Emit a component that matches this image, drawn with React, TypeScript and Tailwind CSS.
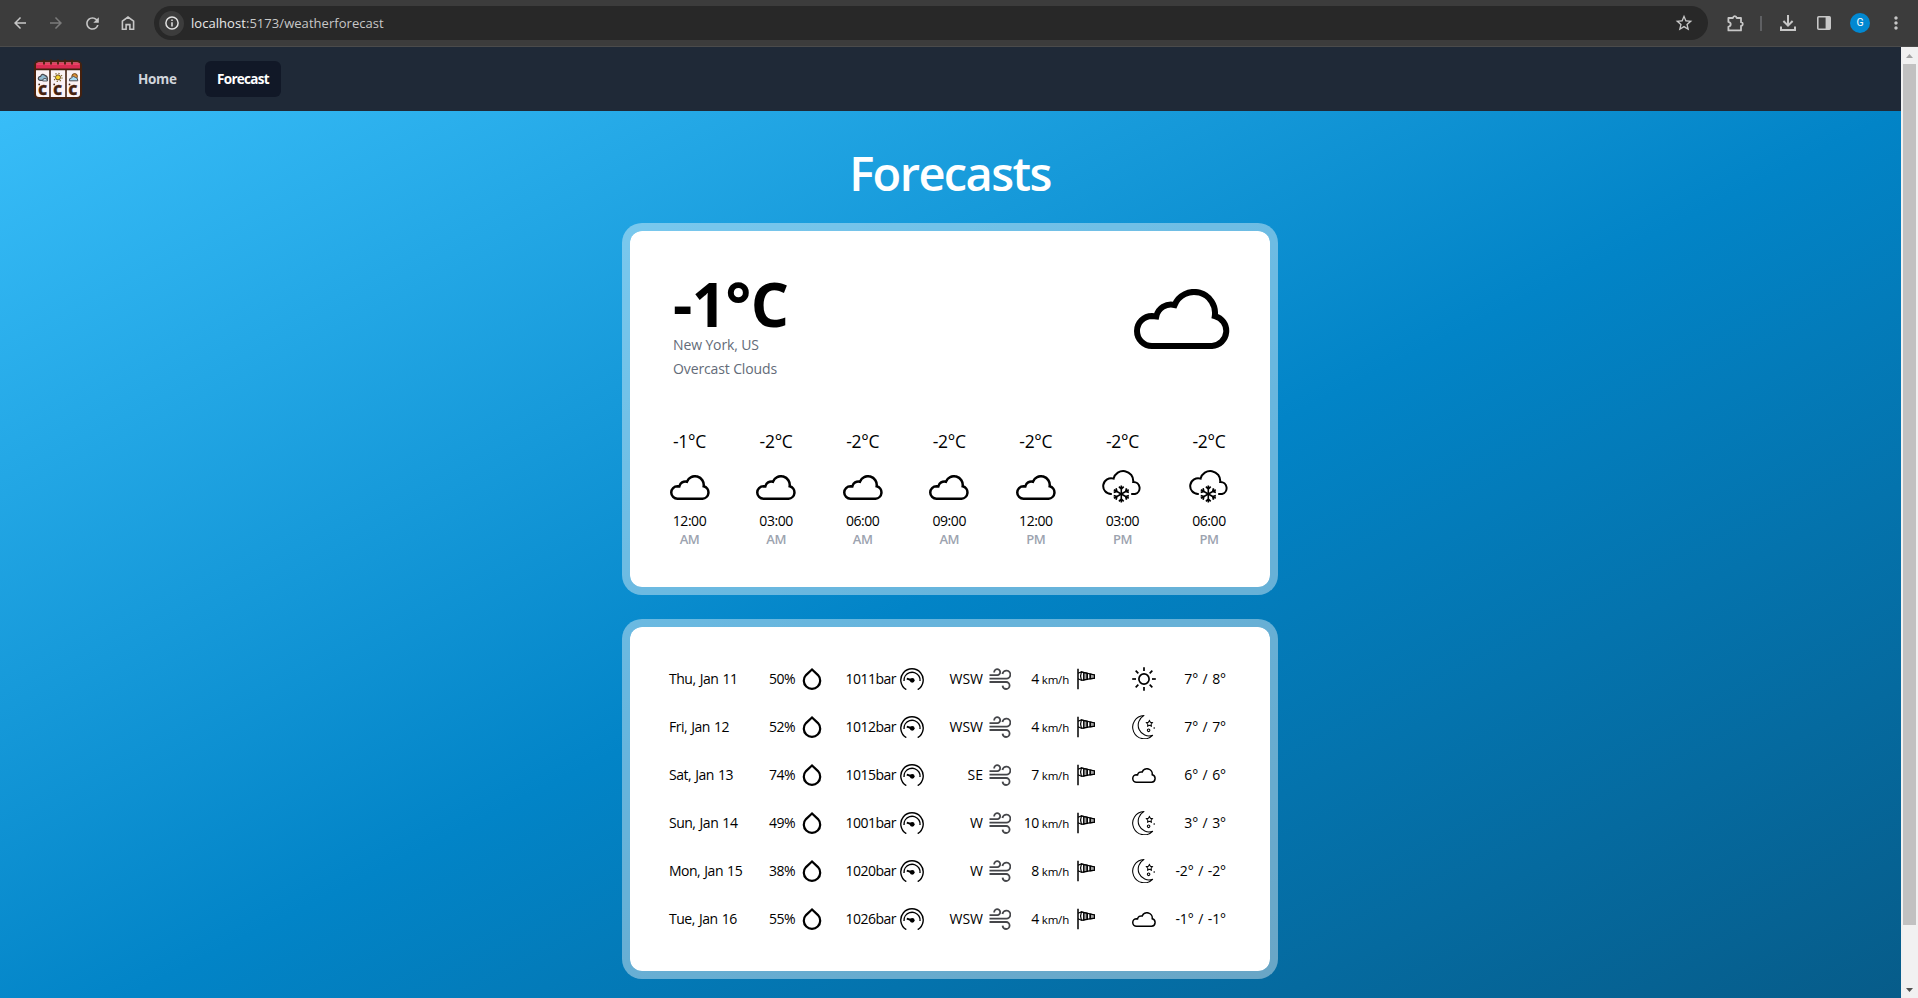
import type { ReactNode } from "react";
import { MdArrowBack, MdArrowForward, MdMoreVert, MdRefresh, MdStarBorder } from "react-icons/md";

type IconProps = { className?: string };

function CloudIcon({ className }: IconProps) {
  return (
    <svg viewBox="0 0 96 60" className={className} fill="none" stroke="#000" strokeWidth="6">
      <path d="M18 57A15 15 0 0 1 18 27L22.3 27.4A15 15 0 0 1 40.6 16A21 21 0 0 1 80.8 27.1A15.2 15.2 0 0 1 78 57Z" />
    </svg>
  );
}

function SnowIcon({ className }: IconProps) {
  return (
    <svg viewBox="0 0 40 34" className={className} fill="none" stroke="#000" strokeWidth="2">
      <path d="M9.8 25H9A7.9 7.9 0 1 1 11.6 9.6A9.97 9.97 0 0 1 31.2 13A6.1 6.1 0 0 1 33 25H29.2" />
      <g strokeWidth="1.6">
        {[0, 60, 120, 180, 240, 300].map((a) => (
          <path key={a} transform={`rotate(${a} 19.3 25)`} d="M19.3 25V16.4M16.9 17.6L19.3 20L21.7 17.6" />
        ))}
      </g>
    </svg>
  );
}

function DropIcon() {
  return (
    <svg viewBox="0 0 20 22" className="h-[22px] w-5" fill="none" stroke="#000" strokeWidth="2.2">
      <path d="M10 1.5L4 7.1A8.2 8.2 0 1 0 16 7.1Z" />
    </svg>
  );
}

function GaugeIcon() {
  return (
    <svg viewBox="0 0 24 22" className="h-[22px] w-6" fill="none" stroke="#000" strokeWidth="1.4">
      <path d="M6.3 21.6A11.2 11.2 0 1 1 17.7 21.6" />
      <path d="M4 13A8.1 8.1 0 0 1 19 8.2Q20.4 10.5 20 13" />
      <circle cx="12.2" cy="12.3" r="2.4" fill="#000" stroke="none" />
      <path d="M6.8 10.6L12 12.2" strokeWidth="2" />
    </svg>
  );
}

function WindIcon() {
  return (
    <svg viewBox="0 0 22 22" className="h-[22px] w-[22px]" fill="none" stroke="#45464a" strokeWidth="1.8">
      <path d="M5.2 4.5A3 3 0 1 1 8.3 7.2H0.5" />
      <path d="M13.4 6A4 4 0 1 1 17.2 10.6H0.5" />
      <path d="M0.5 14H17.2A3.5 3.5 0 1 1 13.6 17.6" />
    </svg>
  );
}

function WindsockIcon() {
  return (
    <svg viewBox="0 0 18 22" className="h-[22px] w-[18px]" fill="none" stroke="#000" strokeWidth="1.2">
      <path d="M1 0.8V21.2" strokeWidth="1.5" />
      <path d="M1 5.3L4.4 4L17.4 7V10.2L4.4 12.2L1 10.7" />
      <path d="M4.4 4Q2.8 8 4.4 12.2H6.8V4.6Z" fill="#fff" />
      <path d="M6.8 4.6L10.2 5.3V11.4L6.8 11.9ZM13.2 6L17.4 7V10.2L13.2 10.9Z" fill="#a3a3a3" />
      <path d="M10.2 5.3V11.4M13.2 6V10.9" />
    </svg>
  );
}

function SunIcon() {
  return (
    <svg viewBox="0 0 24 24" className="h-6 w-6" fill="none" stroke="#000" strokeWidth="1.7">
      <circle cx="12" cy="12" r="5.1" />
      {[0, 45, 90, 135, 180, 225, 270, 315].map((a) => (
        <path key={a} transform={`rotate(${a} 12 12)`} d="M12 0.2V4" />
      ))}
    </svg>
  );
}

function MoonIcon() {
  return (
    <svg viewBox="0 0 24 24" className="h-6 w-6" fill="none" stroke="#000" strokeWidth="1.05">
      <path d="M11.9 0.6A11.6 11.6 0 1 0 20.6 20.3A10.8 10.8 0 0 1 11.9 0.6Z" strokeLinejoin="round" />
      <path d="M17.4 5.6L18.4 7.3L20.4 7.7L19.1 9.2L19.4 11.1L17.4 10.3L15.6 11.2L15.8 9.2L14.4 7.7L16.4 7.3Z" />
      <circle cx="16.6" cy="15.3" r="1.3" />
      <circle cx="22.2" cy="13" r="0.8" fill="#000" stroke="none" />
    </svg>
  );
}

function Logo() {
  const tiles = [2, 17, 32.3];
  return (
    <svg viewBox="0 0 48 40" className="h-10 w-12">
      <rect x="1" y="2.6" width="46" height="36.4" rx="4" fill="#fbf3f5" stroke="#45210f" strokeWidth="2" />
      <path d="M2 10V6Q2 3.6 4.6 3.6H43.4Q46 3.6 46 6V10Z" fill="#d92b52" />
      <path d="M3 5.2H45" stroke="#f0506c" strokeWidth="1.2" />
      <path d="M10 0.4V5.4M17 0.4V5.4M24 0.4V5.4M31 0.4V5.4M38 0.4V5.4" stroke="#45210f" strokeWidth="1.8" />
      <path d="M1 10.4H47M16 10.4V38.6M32 10.4V38.6" stroke="#45210f" strokeWidth="1.6" />
      <path d="M4.6 20.6Q3.6 18 6.5 17.4Q8 13.8 11 16.4Q14 17.6 13.4 21.4H6Z" fill="#8fb9d0" stroke="#4b4a50" strokeWidth="1.2" />
      <path d="M8.6 22Q8.4 19.4 11 19.4Q13.6 19.6 13.4 22Z" fill="#c9e9f7" stroke="#4b4a50" strokeWidth="0.9" />
      <circle cx="24" cy="18.4" r="2.5" fill="#f6d32f" stroke="#5a3a14" strokeWidth="0.9" />
      <circle cx="24" cy="18.4" r="4" fill="none" stroke="#7b5f22" strokeWidth="1.2" strokeDasharray="1.2 1.94" />
      <circle cx="40.6" cy="17.4" r="2.8" fill="#e09238" stroke="#5a3a14" strokeWidth="0.9" />
      <path d="M35.4 21.8Q35 19 37.6 18.8Q39 16 41.4 18.4Q44 18.8 43.8 21.8Z" fill="#a6dcf5" stroke="#4b4a50" strokeWidth="1" />
      {tiles.map((x) => (
        <g key={x} fill="#45210f">
          <circle cx={x + 3.2} cy="25.4" r="0.9" />
          <text
            x={x + 2.2}
            y="35.8"
            stroke="#45210f"
            strokeWidth="0.5"
            className="font-['Open_Sans',sans-serif] text-[13.5px] font-extrabold"
          >
            C
          </text>
        </g>
      ))}
    </svg>
  );
}

function ToolButton({ children }: { children: ReactNode }) {
  return <div className="flex w-9 shrink-0 items-center justify-center text-[#c7c7c7]">{children}</div>;
}

function BrowserBar() {
  return (
    <div className="flex h-[47px] shrink-0 border-b border-[#4b4b4b] bg-[#3c3c3c] pl-[2px]">
      <ToolButton>
        <MdArrowBack className="size-[18px]" />
      </ToolButton>
      <ToolButton>
        <MdArrowForward className="size-[18px] text-[#7b7b7b]" />
      </ToolButton>
      <ToolButton>
        <MdRefresh className="size-[19px]" />
      </ToolButton>
      <ToolButton>
        <svg viewBox="0 0 14 14" className="size-[14px]" fill="none" stroke="currentColor" strokeWidth="1.6">
          <path d="M1.4 5.2L7 1L12.6 5.2V13.2H8.9V8.6H5.1V13.2H1.4Z" />
        </svg>
      </ToolButton>
      <div className="my-[6px] ml-2 flex w-[1554px] shrink-0 items-center rounded-full bg-[#282828] pl-[5px] pr-[14px]">
        <div className="flex size-[25px] items-center justify-center rounded-full bg-[#3c3c3c]">
          <svg viewBox="0 0 14 14" className="size-[14px]" fill="none" stroke="#e3e3e3" strokeWidth="1.5">
            <circle cx="7" cy="7" r="6.1" />
            <path d="M7 6.2V10.4M7 3.5V5" />
          </svg>
        </div>
        <div className="ml-[7px] flex-1 text-[13px] leading-5 tracking-[0.05px] text-[#c7c7c7]">
          <span className="text-[#e8e8e8]">localhost</span>:5173/weatherforecast
        </div>
        <MdStarBorder className="size-[20px] text-[#c7c7c7]" />
      </div>
      <div className="ml-[9px] flex">
        <ToolButton>
          <svg viewBox="0 0 17 17" className="size-[17px]" fill="none" stroke="currentColor" strokeWidth="1.8">
            <path
              d="M1.4 3H6Q6.2 1.2 7.8 1.2Q9.4 1.2 9.6 3H14V7.2Q15.8 7.4 15.8 9.1Q15.8 10.8 14 11V15.4H1.4V11.8Q3.7 11.2 3.7 9.3Q3.7 7.4 1.4 6.9Z"
              strokeLinejoin="round"
            />
          </svg>
        </ToolButton>
      </div>
      <div className="ml-[7px] mr-2 h-[15px] w-[2px] self-center bg-[#5f6063]" />
      <ToolButton>
        <svg viewBox="0 0 16 16" className="size-4" fill="none" stroke="currentColor" strokeWidth="2">
          <path d="M8 0V10M3.4 6L8 10.6L12.6 6M1 11.4V15H15V11.4" />
        </svg>
      </ToolButton>
      <ToolButton>
        <svg viewBox="0 0 14 14" className="size-[14px]">
          <rect x="0.8" y="0.8" width="12.4" height="12.4" rx="1" fill="none" stroke="currentColor" strokeWidth="1.6" />
          <path d="M8.6 0.8H13V13.2H8.6Z" fill="currentColor" />
        </svg>
      </ToolButton>
      <ToolButton>
        <div className="flex size-5 items-center justify-center rounded-full bg-[#0288d1] font-[Roboto,sans-serif] text-[10.5px] leading-none text-white">
          G
        </div>
      </ToolButton>
      <ToolButton>
        <MdMoreVert className="size-[20px]" />
      </ToolButton>
    </div>
  );
}

function Scrollbar() {
  return (
    <div className="flex w-[17px] shrink-0 flex-col items-center bg-[#f1f1f1]">
      <svg viewBox="0 0 17 17" className="size-[17px] shrink-0" fill="#a3a3a3">
        <path d="M5 11L8.5 7L12 11Z" />
      </svg>
      <div className="h-[861px] w-[13px] shrink-0 bg-[#c1c1c1]" />
      <svg viewBox="0 0 17 17" className="mt-auto size-[17px] shrink-0" fill="#505050">
        <path d="M5 7L8.5 11L12 7Z" />
      </svg>
    </div>
  );
}

const hours = [
  { temp: "-1°C", time: "12:00", period: "AM", snow: false },
  { temp: "-2°C", time: "03:00", period: "AM", snow: false },
  { temp: "-2°C", time: "06:00", period: "AM", snow: false },
  { temp: "-2°C", time: "09:00", period: "AM", snow: false },
  { temp: "-2°C", time: "12:00", period: "PM", snow: false },
  { temp: "-2°C", time: "03:00", period: "PM", snow: true },
  { temp: "-2°C", time: "06:00", period: "PM", snow: true },
];

const days = [
  { date: "Thu, Jan 11", humidity: "50%", pressure: "1011bar", dir: "WSW", speed: "4", sky: "sun", range: "7° / 8°" },
  { date: "Fri, Jan 12", humidity: "52%", pressure: "1012bar", dir: "WSW", speed: "4", sky: "moon", range: "7° / 7°" },
  { date: "Sat, Jan 13", humidity: "74%", pressure: "1015bar", dir: "SE", speed: "7", sky: "cloud", range: "6° / 6°" },
  { date: "Sun, Jan 14", humidity: "49%", pressure: "1001bar", dir: "W", speed: "10", sky: "moon", range: "3° / 3°" },
  { date: "Mon, Jan 15", humidity: "38%", pressure: "1020bar", dir: "W", speed: "8", sky: "moon", range: "-2° / -2°" },
  { date: "Tue, Jan 16", humidity: "55%", pressure: "1026bar", dir: "WSW", speed: "4", sky: "cloud", range: "-1° / -1°" },
];

function SkyIcon({ sky }: { sky: string }) {
  if (sky === "sun") return <SunIcon />;
  if (sky === "moon") return <MoonIcon />;
  return <CloudIcon className="h-[15px] w-6" />;
}

function CurrentCard() {
  return (
    <section className="h-[372px] w-[656px] rounded-[20px] border-8 border-white/40 bg-white bg-clip-padding pt-[45px]">
      <div className="flex justify-between pl-[43px] pr-10">
        <div>
          <div className="text-[60px] font-bold leading-[57px] tracking-[-0.5px]">-1°C</div>
          <div className="text-[14px] font-medium leading-6 tracking-[-0.12px] text-[#636b78]">New York, US</div>
          <div className="text-[14px] font-medium leading-6 tracking-[-0.12px] text-[#636b78]">Overcast Clouds</div>
        </div>
        <CloudIcon className="mt-[13px] h-[60px] w-24" />
      </div>
      <div className="mt-[46px] flex justify-between pl-[39.5px] pr-[41px]">
        {hours.map((h, i) => (
          <div key={i} className="flex w-10 flex-col items-center whitespace-nowrap">
            <div className="text-[17.5px] font-medium leading-7 tracking-[-0.3px]">{h.temp}</div>
            <div className="mt-3 flex h-10 items-center">
              {h.snow ? <SnowIcon className="mb-0.5 h-[34px] w-10" /> : <CloudIcon className="h-[25px] w-10" />}
            </div>
            <div className="mt-1 text-[14px] font-medium leading-5 tracking-[-0.45px]">{h.time}</div>
            <div className="text-[13px] font-semibold leading-4 tracking-[-0.5px] text-[#9ca3af]">{h.period}</div>
          </div>
        ))}
      </div>
    </section>
  );
}

function DailyCard() {
  return (
    <section className="mt-6 h-[360px] w-[656px] rounded-[20px] border-8 border-white/40 bg-white bg-clip-padding py-7 pl-[39px] pr-11">
      {days.map((d) => (
        <div
          key={d.date}
          className="grid h-12 grid-cols-[99px_54px_102px_87px_84px_61px_70px] items-center whitespace-nowrap text-[14px] font-medium leading-6 tracking-[-0.5px]"
        >
          <div className="[word-spacing:1px]">{d.date}</div>
          <div className="flex items-center justify-end gap-[7px]">
            {d.humidity}
            <DropIcon />
          </div>
          <div className="flex items-center justify-end gap-1">
            {d.pressure}
            <GaugeIcon />
          </div>
          <div className="flex items-center justify-end gap-[6px] tracking-[0px]">
            {d.dir}
            <WindIcon />
          </div>
          <div className="flex items-center justify-end gap-2">
            <span>
              {d.speed} <span className="text-[11.5px] font-medium tracking-[-0.2px]">km/h</span>
            </span>
            <WindsockIcon />
          </div>
          <div className="flex items-center justify-end">
            <SkyIcon sky={d.sky} />
          </div>
          <div className="text-right tracking-[-0.1px] [word-spacing:1px]">{d.range}</div>
        </div>
      ))}
    </section>
  );
}

export default function App() {
  return (
    <div className="flex h-screen w-full flex-col overflow-hidden bg-[#202020] font-['Open_Sans','Noto_Sans',sans-serif] text-black">
      <BrowserBar />
      <div className="flex min-h-0 flex-1">
        <div className="min-w-0 flex-1 overflow-hidden">
          <nav className="flex h-16 items-center bg-[#1f2937] pl-[34px] text-[13.5px] font-bold leading-5">
            <Logo />
            <a className="ml-11 w-[63px] px-3 py-2 tracking-[-0.3px] text-[#d1d5db]">Home</a>
            <a className="ml-4 w-[76px] whitespace-nowrap rounded-md bg-[#111827] py-2 text-center tracking-[-0.7px] text-white">
              Forecast
            </a>
          </nav>
          <main className="flex h-[949px] flex-col items-center bg-[linear-gradient(to_bottom_right,#38bdf8,#0284c7,#075985)] pr-px pt-[38px]">
            <h1 className="mb-[26px] text-[47px] font-semibold leading-[48px] tracking-[-1.6px] text-white">Forecasts</h1>
            <CurrentCard />
            <DailyCard />
          </main>
        </div>
        <Scrollbar />
      </div>
    </div>
  );
}
